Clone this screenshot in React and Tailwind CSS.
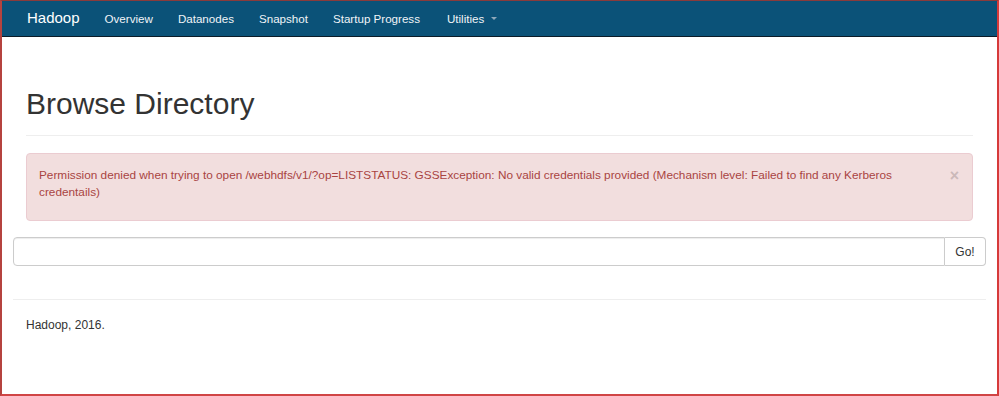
const navItems = ['Overview', 'Datanodes', 'Snapshot', 'Startup Progress'];

const App = () => {
  return (
    <div
      className="w-[999px] h-[396px] overflow-hidden bg-white border-l-2 border-r-2 border-b-2 border-t border-l-[#b5433f] border-r-[#d63a3a] border-b-[#d04545] border-t-[#8a3b3b] text-[#333]"
      style={{ fontFamily: '"Liberation Sans", Arial, sans-serif' }}
    >
      {/* Navbar */}
      <div className="h-[36px] bg-[#0b5278] border-b border-[#0b1c28] flex items-center">
        <span className="ml-[25px] text-[15px] text-white">Hadoop</span>
        <ul className="flex items-center ml-[25px] gap-[25px] text-[11.6px] text-[#f0f4f7]">
          {navItems.map((item) => (
            <li key={item}>{item}</li>
          ))}
          <li className="flex items-center gap-[7px] ml-[2px]">
            Utilities
            <span className="w-0 h-0 border-l-[3px] border-r-[3px] border-t-[3px] border-l-transparent border-r-transparent border-t-[#8fa8ba]" />
          </li>
        </ul>
      </div>

      {/* Header */}
      <div className="px-[24px]">
        <h1 className="mt-[49px] text-[30px] leading-[36px] text-[#333] pb-[13px] border-b border-[#eee]">
          Browse Directory
        </h1>

        {/* Error alert */}
        <div className="mt-[17px] h-[68px] bg-[#f2dede] border border-[#ebccd1] rounded-[4px] text-[#a94442] text-[11.8px] leading-[17px] pl-[12px] pr-[13px] pt-[13px] flex">
          <p className="flex-1 pr-[10px]">
            Permission denied when trying to open /webhdfs/v1/?op=LISTSTATUS: GSSException: No valid credentials provided (Mechanism level: Failed to find any Kerberos credentails)
          </p>
          <span className="text-[16px] leading-[17px] font-bold text-[#cbb9b9]">×</span>
        </div>
      </div>

      {/* Path input */}
      <div className="mx-[11px] mt-[16px] flex h-[29px]">
        <div className="flex-1 border border-[#ccc] rounded-l-[4px] shadow-[inset_0_1px_1px_rgba(0,0,0,0.075)]" />
        <button className="w-[41px] border border-l-0 border-[#ccc] rounded-r-[4px] bg-white text-[12px] text-[#333]">
          Go!
        </button>
      </div>

      {/* Footer */}
      <div className="mx-[11px] mt-[33px] border-t border-[#eee]">
        <p className="ml-[13px] mt-[16px] text-[12px] text-[#333]">Hadoop, 2016.</p>
      </div>
    </div>
  );
};

export default App;
